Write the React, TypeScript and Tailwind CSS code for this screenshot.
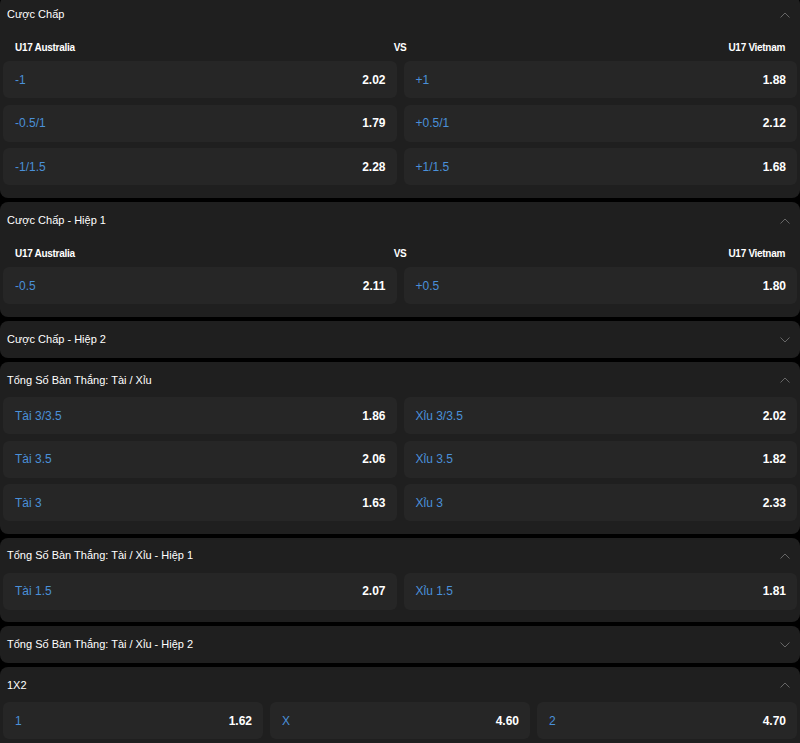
import React from "react";

type Odd = { label: string; odd: string };

const Chevron = ({ up }: { up: boolean }) => (
  <svg width="12" height="8" viewBox="0 0 12 8" fill="none" className="text-[#666666]">
    {up ? (
      <path d="M1.5 6.5 L6 2 L10.5 6.5" stroke="currentColor" strokeWidth="1" />
    ) : (
      <path d="M1.5 1.5 L6 6 L10.5 1.5" stroke="currentColor" strokeWidth="1" />
    )}
  </svg>
);

const Cell = ({ o }: { o: Odd }) => (
  <div className="h-[37px] rounded-[6px] bg-[#262626] flex items-center justify-between pl-[12px] pr-[11px]">
    <span className="text-[12px] text-[#4a90d9]">{o.label}</span>
    <span className="text-[12px] font-bold text-white">{o.odd}</span>
  </div>
);

const Panel = ({
  title,
  open,
  teams,
  cols = 2,
  rows = [],
  first,
}: {
  title: string;
  open: boolean;
  teams?: boolean;
  cols?: number;
  rows?: Odd[];
  first?: boolean;
}) => (
  <div className={`bg-[#1f1f1f] rounded-[8px] ${first ? "-mt-[4px]" : ""}`}>
    <div
      className={`flex items-center justify-between pl-[7px] pr-[9px] ${
        open && !teams ? "h-[35px] pt-[1px]" : "h-[37px]"
      }`}
    >
      <span className="text-[11px] text-white">{title}</span>
      <Chevron up={open} />
    </div>
    {open && (
      <div className={`px-[3px] ${teams ? "pb-[13px]" : "pb-[12.5px]"}`}>
        {teams && (
          <div className="h-[28px] flex items-center justify-between px-[12px] text-[10px] text-white font-bold tracking-[-0.3px]">
            <span className="flex-1">U17 Australia</span>
            <span>VS</span>
            <span className="flex-1 text-right">U17 Vietnam</span>
          </div>
        )}
        <div
          className={`grid gap-x-[7px] gap-y-[6.5px] ${cols === 3 ? "grid-cols-3" : "grid-cols-2"}`}
        >
          {rows.map((o, i) => (
            <Cell key={i} o={o} />
          ))}
        </div>
      </div>
    )}
  </div>
);

export default function App() {
  return (
    <div
      className="w-[800px] h-[743px] overflow-hidden bg-black flex flex-col gap-[4px]"
      style={{ fontFamily: '"Liberation Sans", Arial, sans-serif' }}
    >
      <Panel
        first
        title="Cược Chấp"
        open
        teams
        rows={[
          { label: "-1", odd: "2.02" },
          { label: "+1", odd: "1.88" },
          { label: "-0.5/1", odd: "1.79" },
          { label: "+0.5/1", odd: "2.12" },
          { label: "-1/1.5", odd: "2.28" },
          { label: "+1/1.5", odd: "1.68" },
        ]}
      />
      <Panel
        title="Cược Chấp - Hiệp 1"
        open
        teams
        rows={[
          { label: "-0.5", odd: "2.11" },
          { label: "+0.5", odd: "1.80" },
        ]}
      />
      <Panel title="Cược Chấp - Hiệp 2" open={false} />
      <Panel
        title="Tổng Số Bàn Thắng: Tài / Xỉu"
        open
        rows={[
          { label: "Tài 3/3.5", odd: "1.86" },
          { label: "Xỉu 3/3.5", odd: "2.02" },
          { label: "Tài 3.5", odd: "2.06" },
          { label: "Xỉu 3.5", odd: "1.82" },
          { label: "Tài 3", odd: "1.63" },
          { label: "Xỉu 3", odd: "2.33" },
        ]}
      />
      <Panel
        title="Tổng Số Bàn Thắng: Tài / Xỉu - Hiệp 1"
        open
        rows={[
          { label: "Tài 1.5", odd: "2.07" },
          { label: "Xỉu 1.5", odd: "1.81" },
        ]}
      />
      <Panel title="Tổng Số Bàn Thắng: Tài / Xỉu - Hiệp 2" open={false} />
      <Panel
        title="1X2"
        open
        cols={3}
        rows={[
          { label: "1", odd: "1.62" },
          { label: "X", odd: "4.60" },
          { label: "2", odd: "4.70" },
        ]}
      />
    </div>
  );
}
